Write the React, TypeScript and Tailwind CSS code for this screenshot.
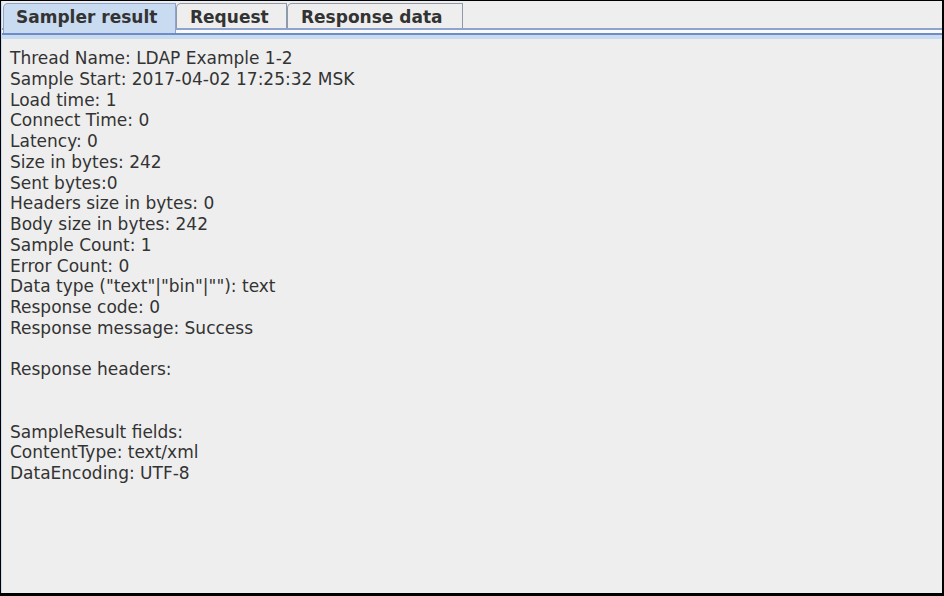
const lines = [
  'Thread Name: LDAP Example 1-2',
  'Sample Start: 2017-04-02 17:25:32 MSK',
  'Load time: 1',
  'Connect Time: 0',
  'Latency: 0',
  'Size in bytes: 242',
  'Sent bytes:0',
  'Headers size in bytes: 0',
  'Body size in bytes: 242',
  'Sample Count: 1',
  'Error Count: 0',
  'Data type ("text"|"bin"|""): text',
  'Response code: 0',
  'Response message: Success',
  '',
  'Response headers:',
  '',
  '',
  'SampleResult fields:',
  'ContentType: text/xml',
  'DataEncoding: UTF-8',
]

function Tab({ label, selected, width }: { label: string; selected?: boolean; width: string }) {
  if (selected) {
    return (
      <div className={`h-[32px] pt-[2px] bg-[#eeeeee] ${width}`}>
        <div className="h-full bg-[#c9dbf1] border-t border-l border-r border-[#8ea4cc] rounded-tl-[5px] pt-[1px] pl-[12px] text-[17px] font-bold text-[#333333] leading-[24px]">
          {label}
        </div>
      </div>
    )
  }
  return (
    <div className={`h-[29px] pt-[2px] bg-[#eeeeee] border-b-2 border-[#8ea4cc] ${width}`}>
      <div className="h-full bg-[#eeeeee] border-t border-l border-r border-[#8e9aaa] rounded-tl-[5px] pt-[1px] pl-[13px] text-[17px] font-bold text-[#333333] leading-[24px]">
        {label}
      </div>
    </div>
  )
}

export default function App() {
  return (
    <div
      className="w-[944px] h-[596px] bg-black pt-[1px] pl-[1px] pr-[2px] pb-[3px]"
      style={{ fontFamily: '"DejaVu Sans", Verdana, sans-serif' }}
    >
      <div className="h-full flex flex-col bg-[#eeeeee] border-l border-[#c9dbf1]">
        <div className="flex items-start h-[32px] bg-[#fafafa]">
          <div className="w-[1px] h-[29px] bg-[#eeeeee] border-b-2 border-[#8ea4cc]" />
          <Tab label="Sampler result" selected width="w-[173px]" />
          <Tab label="Request" width="w-[111px]" />
          <Tab label="Response data" width="w-[176px]" />
          <div className="flex-1 h-[29px] bg-[#eeeeee] border-b-2 border-[#8ea4cc]" />
        </div>
        <div className="h-[2px] bg-[#6d8cc8]" />
        <div className="h-[4px] bg-[#c9dbf1]" />
        <div className="flex-1 pt-[9px] pl-[8px] text-[17px] leading-[20.75px] text-[#333333]">
          {lines.map((l, i) => (
            <div key={i} className="h-[20.75px] whitespace-pre">
              {l}
            </div>
          ))}
        </div>
      </div>
    </div>
  )
}
